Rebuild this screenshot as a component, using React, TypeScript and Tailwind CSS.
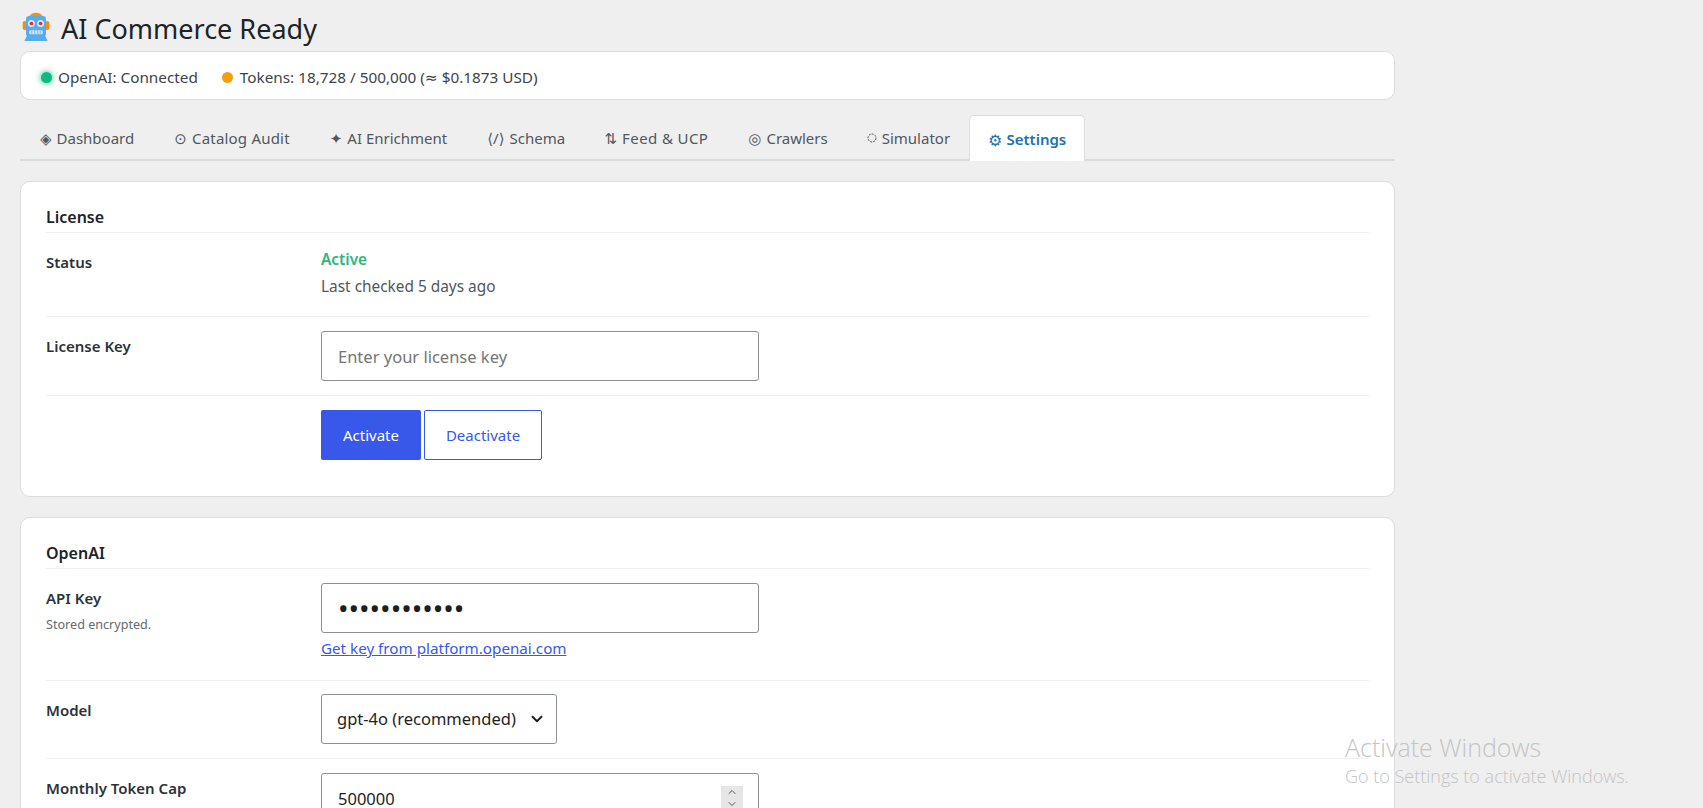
import React from 'react';
import { ChevronDown, ChevronUp } from 'lucide-react';

const dashedCircle = (
  <svg width="10" height="10" viewBox="0 0 10 10">
    <circle cx="5" cy="5" r="4" fill="none" stroke="#50575e" strokeWidth="1" strokeDasharray="2 1" />
  </svg>
);

const tabs: { icon: React.ReactNode; label: string; className?: string }[] = [
  { icon: '◈', label: 'Dashboard' },
  { icon: '⊙', label: 'Catalog Audit', className: 'tracking-[0.2px]' },
  { icon: '✦', label: 'AI Enrichment' },
  { icon: '⟨/⟩', label: 'Schema', className: '-mr-px' },
  { icon: '⇅', label: 'Feed & UCP', className: 'tracking-[0.4px]' },
  { icon: '◎', label: 'Crawlers', className: '-mr-px' },
  { icon: dashedCircle, label: 'Simulator', className: '-mr-px' },
];

function RobotIcon() {
  return (
    <svg width="30" height="30" viewBox="0 0 36 36" className="ml-px shrink-0 -translate-y-[3px]">
      <path d="M8 12a10 10 0 0 1 20 0" fill="#f4900c" />
      <rect x="2" y="12" width="5" height="11" rx="2.5" fill="#f4900c" />
      <rect x="29" y="12" width="5" height="11" rx="2.5" fill="#f4900c" />
      <path d="M4 36l3-6h22l3 6z" fill="#55acee" />
      <rect x="6" y="6" width="24" height="25" rx="4" fill="#55acee" />
      <circle cx="12.5" cy="15" r="4.2" fill="#e1e8ed" />
      <circle cx="23.5" cy="15" r="4.2" fill="#e1e8ed" />
      <circle cx="12.5" cy="15" r="2.2" fill="#dd2e44" />
      <circle cx="23.5" cy="15" r="2.2" fill="#dd2e44" />
      <rect x="10" y="23" width="16" height="5" rx="1.5" fill="#e1e8ed" />
      <path d="M13 23v5M16.5 23v5M20 23v5M23 23v5" stroke="#55acee" strokeWidth="1" />
    </svg>
  );
}

function Divider() {
  return <div className="h-px bg-[#f0f0f1]" />;
}

function Input(props: React.InputHTMLAttributes<HTMLInputElement>) {
  return (
    <input
      readOnly
      {...props}
      className="block h-[50px] w-[438px] rounded-[3px] border border-[#8c8f94] bg-white px-4 text-[16.5px] text-[#1e1e1e] outline-none placeholder:text-[#757575]"
    />
  );
}

export default function App() {
  return (
    <div className="relative h-[808px] overflow-hidden bg-[#efefef] font-['Noto_Sans','DejaVu_Sans',sans-serif] text-[15px] text-[#3c434a]">
      <div className="ml-5 w-[1375px]">
        <h1 className="flex h-[51px] items-center gap-[10px] pt-[7px] text-[27px] font-normal text-[#1d2327]">
          <RobotIcon />
          AI Commerce Ready
        </h1>

        <div className="flex h-[49px] items-center gap-6 rounded-[10px] border border-[#dcdcde] bg-white px-5 pt-[3px] text-[15.3px]">
          <span className="flex items-center gap-[6px]">
            <span className="h-[11px] w-[11px] rounded-full bg-[#10b981] shadow-[0_0_6px_#10b981]" />
            OpenAI: Connected
          </span>
          <span className="flex items-center gap-[7px]">
            <span className="h-[11px] w-[11px] rounded-full bg-[#f59e0b]" />
            Tokens: 18,728 / 500,000 (≈ $0.1873 USD)
          </span>
        </div>

        <div className="mt-[15px] flex h-[46px] border-b-2 border-[#dcdcde] pt-[2px]">
          {tabs.map((t) => (
            <div key={t.label} className={`flex items-center gap-[5px] px-5 text-[#50575e] ${t.className ?? ''}`}>
              <span className="text-[15px]">{t.icon}</span>
              {t.label}
            </div>
          ))}
          <div className="-mt-[2px] flex h-[46px] items-center gap-1 rounded-t-[5px] border border-b-0 border-[#dcdcde] bg-white px-[18px] pt-[2px] font-semibold text-[#2271b1]">
            <span className="text-[16px]">⚙</span>
            Settings
          </div>
        </div>

        <section className="mt-5 h-[316px] rounded-[10px] border border-[#dcdcde] bg-white px-[25px] pt-[23px]">
          <h2 className="h-[27px] text-[16px] font-semibold leading-[24px] text-[#1d2327]">License</h2>
          <Divider />
          <div className="flex h-[83px] pt-[15px]">
            <div className="w-[275px] pt-[3px] font-semibold text-[#2c3338]">Status</div>
            <div className="pt-px text-[15.4px]">
              <div className="font-semibold leading-[22px] text-[#2fb67c]">Active</div>
              <div className="mt-[5px] leading-[22px] text-[#50575e]">Last checked 5 days ago</div>
            </div>
          </div>
          <Divider />
          <div className="flex h-[78px] pt-[14px]">
            <div className="w-[275px] pt-[4px] font-semibold text-[#2c3338]">License Key</div>
            <Input placeholder="Enter your license key" />
          </div>
          <Divider />
          <div className="flex gap-[3px] pl-[275px] pt-[14px]">
            <button className="h-[50px] w-[100px] rounded-[2px] bg-[#3858e9] text-white">Activate</button>
            <button className="h-[50px] w-[118px] rounded-[2px] border border-[#3858e9] bg-white text-[#3858e9]">Deactivate</button>
          </div>
        </section>

        <section className="mt-5 rounded-[10px] border border-[#dcdcde] bg-white px-[25px] pt-[23px] pb-8">
          <h2 className="h-[27px] text-[16px] font-semibold leading-[24px] text-[#1d2327]">OpenAI</h2>
          <Divider />
          <div className="flex h-[111px] pt-[14px]">
            <div className="w-[275px]">
              <div className="pt-[4px] font-semibold text-[#2c3338]">API Key</div>
              <div className="mt-[6px] text-[12.6px] text-[#646970]">Stored encrypted.</div>
            </div>
            <div>
              <input
                readOnly
                type="password"
                value="aaaaaaaaaaaa"
                className="block h-[50px] w-[438px] rounded-[3px] border border-[#8c8f94] bg-white px-4 text-[28px] text-[#1e1e1e] outline-none"
              />
              <a href="#" className="mt-[4px] block text-[15.2px] leading-[22px] text-[#3858e9] underline">Get key from platform.openai.com</a>
            </div>
          </div>
          <Divider />
          <div className="flex h-[77px] pt-[13px]">
            <div className="w-[275px] pt-[5px] font-semibold text-[#2c3338]">Model</div>
            <div className="relative h-[50px]">
              <select className="h-[50px] w-[236px] appearance-none rounded-[3px] border border-[#8c8f94] bg-white pl-[15px] text-[16.5px] text-[#1e1e1e] outline-none">
                <option>gpt-4o (recommended)</option>
              </select>
              <ChevronDown size={18} strokeWidth={2.5} className="absolute right-[11px] top-4 text-[#1e1e1e]" />
            </div>
          </div>
          <Divider />
          <div className="flex h-[76px] pt-[14px]">
            <div className="w-[275px] pt-[4px] font-semibold text-[#2c3338]">Monthly Token Cap</div>
            <div className="relative h-[50px]">
              <Input value="500000" />
              <div className="absolute right-4 top-[13px] flex h-[24px] w-[22px] flex-col items-center justify-center bg-[#e6e6e6] text-[#555]">
                <ChevronUp size={12} />
                <ChevronDown size={12} />
              </div>
            </div>
          </div>
        </section>
      </div>

      <div className="pointer-events-none absolute left-[1345px] top-[731px] font-['Open_Sans',sans-serif] text-[#c4c4c4]">
        <div className="text-[25px] font-light leading-[32px]">Activate Windows</div>
        <div className="text-[18px] font-light leading-[27px]">Go to Settings to activate Windows.</div>
      </div>
    </div>
  );
}
